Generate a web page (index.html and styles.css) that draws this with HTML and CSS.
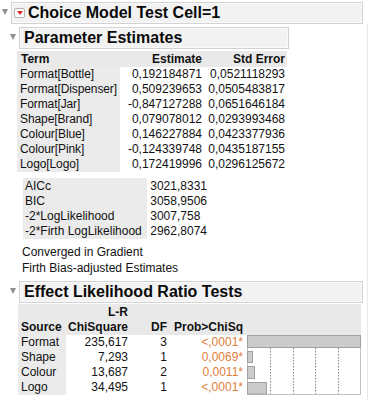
FILE: index.html
```html
<!DOCTYPE html>
<html>
<head>
<meta charset="utf-8">
<link rel="stylesheet" href="styles.css">
</head>
<body>
<div class="report">
  <div class="outline top">
    <div class="ohead">
      <span class="tri"></span>
      <div class="obox obox-top"><span class="menu-icon"></span>Choice Model Test Cell=1</div>
    </div>
    <div class="ocontent top-content">
      <div class="outline">
        <div class="ohead">
          <span class="tri"></span>
          <div class="obox obox-param">Parameter Estimates</div>
        </div>
        <table class="ptable">
          <colgroup><col class="c-term"><col class="c-est"><col class="c-se"></colgroup>
          <thead>
            <tr><th class="lft">Term</th><th class="est">Estimate</th><th class="se">Std Error</th></tr>
          </thead>
          <tbody>
            <tr><td class="lbl">Format[Bottle]</td><td class="est">0,192184871</td><td class="se">0,0521118293</td></tr>
            <tr><td class="lbl">Format[Dispenser]</td><td class="est">0,509239653</td><td class="se">0,0505483817</td></tr>
            <tr><td class="lbl">Format[Jar]</td><td class="est">-0,847127288</td><td class="se">0,0651646184</td></tr>
            <tr><td class="lbl">Shape[Brand]</td><td class="est">0,079078012</td><td class="se">0,0293993468</td></tr>
            <tr><td class="lbl">Colour[Blue]</td><td class="est">0,146227884</td><td class="se">0,0423377936</td></tr>
            <tr><td class="lbl">Colour[Pink]</td><td class="est">-0,124339748</td><td class="se">0,0435187155</td></tr>
            <tr><td class="lbl">Logo[Logo]</td><td class="est">0,172419996</td><td class="se">0,0296125672</td></tr>
          </tbody>
        </table>
        <table class="stable">
          <colgroup><col class="c-slbl"><col class="c-sval"></colgroup>
          <tbody>
            <tr><td class="slbl">AICc</td><td class="sval">3021,8331</td></tr>
            <tr><td class="slbl">BIC</td><td class="sval">3058,9506</td></tr>
            <tr><td class="slbl">-2*LogLikelihood</td><td class="sval dec">3007,758</td></tr>
            <tr><td class="slbl">-2*Firth LogLikelihood</td><td class="sval">2962,8074</td></tr>
          </tbody>
        </table>
        <div class="notes">
          <div>Converged in Gradient</div>
          <div>Firth Bias-adjusted Estimates</div>
        </div>
      </div>
      <div class="outline effect">
        <div class="ohead">
          <span class="tri"></span>
          <div class="obox obox-effect">Effect Likelihood Ratio Tests</div>
        </div>
        <table class="etable">
          <colgroup><col class="c-src"><col class="c-chi"><col class="c-df"><col class="c-p"><col class="c-chart"></colgroup>
          <thead>
            <tr class="h1"><th></th><th class="num">L-R</th><th></th><th></th><th></th></tr>
            <tr class="h2"><th class="lft">Source</th><th class="num">ChiSquare</th><th class="num">DF</th><th class="num">Prob&gt;ChiSq</th><th></th></tr>
          </thead>
          <tbody>
            <tr>
              <td class="lbl">Format</td><td class="num">235,617</td><td class="num">3</td><td class="num pv">&lt;,0001*</td>
              <td class="chart" rowspan="4">
                <svg width="114" height="60" viewBox="0 0 114 60">
                  <rect x="0.5" y="0.5" width="113" height="59" fill="#fff" stroke="#c2c2c2"/>
                  <g stroke="#8a8a8a" stroke-width="1" stroke-dasharray="1.5 1.5">
                    <line x1="23.5" y1="1" x2="23.5" y2="59"/>
                    <line x1="46.5" y1="1" x2="46.5" y2="59"/>
                    <line x1="68.5" y1="1" x2="68.5" y2="59"/>
                    <line x1="91.5" y1="1" x2="91.5" y2="59"/>
                  </g>
                  <g fill="#cbcbcb" stroke="#a0a0a0">
                    <rect x="0.5" y="0.5" width="113" height="12"/>
                    <rect x="0.5" y="16.5" width="5" height="11"/>
                    <rect x="0.5" y="31.5" width="7" height="12"/>
                    <rect x="0.5" y="47.5" width="19" height="11.5"/>
                  </g>
                </svg>
              </td>
            </tr>
            <tr><td class="lbl">Shape</td><td class="num">7,293</td><td class="num">1</td><td class="num pv">0,0069*</td></tr>
            <tr><td class="lbl">Colour</td><td class="num">13,687</td><td class="num">2</td><td class="num pv">0,0011*</td></tr>
            <tr><td class="lbl">Logo</td><td class="num">34,495</td><td class="num">1</td><td class="num pv">&lt;,0001*</td></tr>
          </tbody>
        </table>
      </div>
    </div>
  </div>
</div>
</body>
</html>
```

FILE: styles.css
```css
html, body {
  margin: 0;
  padding: 0;
  background: #fff;
}
body {
  font-family: "Liberation Sans", Arial, sans-serif;
  font-size: 12px;
  color: #111;
}
.report {
  width: 368px;
}
.ohead {
  display: flex;
  align-items: flex-start;
}
.top > .ohead {
  padding: 2px 0 0 2px;
}
.tri {
  width: 0;
  height: 0;
  border-left: 3.5px solid transparent;
  border-right: 3.5px solid transparent;
  border-top: 6px solid #8e8e8e;
  margin: 7px 3px 0 0;
  flex: none;
}
.obox {
  height: 22px;
  box-sizing: border-box;
  border: 1px solid #d2d2d2;
  background: #f2f2f2;
  box-shadow: inset 0 0 0 1px #f9f9f9;
  font-weight: bold;
  font-size: 16px;
  line-height: 20px;
  display: flex;
  align-items: center;
  padding-left: 4px;
  color: #0a0a0a;
  white-space: nowrap;
}
.obox-top {
  width: 352px;
  padding-left: 2px;
}
.menu-icon {
  width: 11px;
  height: 10px;
  box-sizing: border-box;
  border: 1px solid #b4b4b4;
  border-radius: 2px;
  background: #fff;
  margin-right: 3px;
  display: inline-flex;
  align-items: center;
  justify-content: center;
  flex: none;
}
.menu-icon::after {
  content: "";
  width: 0;
  height: 0;
  border-left: 3px solid transparent;
  border-right: 3px solid transparent;
  border-top: 4px solid #d8252b;
}
.top-content {
  padding-left: 10px;
  border-right: 1px solid #e8e8e8;
  padding-bottom: 10px;
}
.top-content > .outline:first-child > .ohead {
  padding-top: 3px;
}
.obox-param {
  width: 270px;
}
.obox-effect {
  width: 344px;
}

/* tables */
table {
  border-collapse: collapse;
  border-spacing: 0;
  table-layout: fixed;
}
td, th {
  padding: 0;
  white-space: nowrap;
}
.ptable {
  width: 270px;
  margin: 2px 0 0 7px;
}
.c-term { width: 103px; }
.c-est { width: 85px; }
.c-se { width: 82px; }
.ptable th {
  height: 16px;
  line-height: 16px;
  background: #e9e9e9;
  font-weight: bold;
  text-align: right;
}
.ptable td {
  height: 15px;
  line-height: 15px;
}
.ptable .lft {
  text-align: left;
  padding-left: 4px;
}
.ptable .lbl {
  background: #ebebeb;
  padding-left: 3px;
  letter-spacing: -0.1px;
}
.ptable .est {
  text-align: right;
  padding-right: 3px;
}
.ptable .se {
  text-align: right;
  padding-right: 2px;
}

/* stats */
.stable {
  width: 186px;
  margin: 7px 0 0 13px;
}
.c-slbl { width: 124px; }
.c-sval { width: 62px; }
.stable td {
  height: 15px;
  line-height: 15px;
}
.slbl {
  background: #ebebeb;
  padding-left: 2px;
}
.stable tr:first-child .slbl {
  box-shadow: 0 -1px 0 #ebebeb;
}
.sval {
  text-align: right;
  padding-right: 2px;
}
.sval.dec {
  padding-right: 8.7px;
}
.notes {
  margin: 5px 0 0 12px;
  line-height: 16px;
}

/* effect */
.effect > .ohead {
  margin-top: 5px;
}
.etable {
  width: 343px;
  margin: 1px 0 0 8px;
}
.c-src { width: 48px; }
.c-chi { width: 64px; }
.c-df { width: 39px; }
.c-p { width: 76px; }
.c-chart { width: 116px; }
.etable th {
  background: #e9e9e9;
  font-weight: bold;
}
.etable .lft {
  text-align: left;
  padding-left: 3px;
}
.etable tr.h1 th {
  height: 16px;
  line-height: 16px;
}
.etable tr.h2 th {
  height: 15px;
  line-height: 15px;
}
.etable th:last-child {
  border-right: 1px solid #fff;
}
.etable td {
  height: 15px;
  line-height: 15px;
}
.etable .lbl {
  background: #ebebeb;
  padding-left: 3px;
}
.etable .num {
  text-align: right;
  padding-right: 2px;
}
.pv {
  color: #e0803c;
}
.etable td.chart {
  vertical-align: top;
  padding-left: 2px;
  line-height: 0;
}
.chart svg {
  display: block;
}
```
